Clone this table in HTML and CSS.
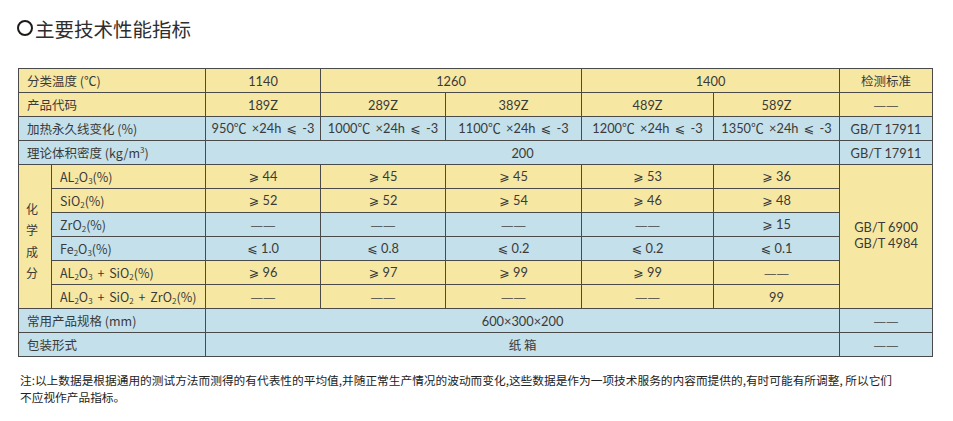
FILE: index.html
```html
<!DOCTYPE html>
<html lang="zh-CN">
<head>
<meta charset="utf-8">
<title>主要技术性能指标</title>
<link rel="stylesheet" href="styles.css">
</head>
<body>
<div class="page">
  <h1 class="title"><span class="ring"></span>主要技术性能指标</h1>
  <table class="spec">
    <colgroup>
      <col class="c1"><col class="c2"><col class="c3"><col class="c4"><col class="c5"><col class="c6"><col class="c7"><col class="c8">
    </colgroup>
    <tbody>
      <tr class="y">
        <td class="lab" colspan="2">分类温度 (℃)</td>
        <td>1140</td>
        <td colspan="2">1260</td>
        <td colspan="2">1400</td>
        <td class="cjk">检测标准</td>
      </tr>
      <tr class="y">
        <td class="lab" colspan="2">产品代码</td>
        <td>189Z</td><td>289Z</td><td>389Z</td><td>489Z</td><td>589Z</td>
        <td><span class="dash">—</span><span class="dash">—</span></td>
      </tr>
      <tr class="b">
        <td class="lab" colspan="2">加热永久线变化 (%)</td>
        <td class="ws">950℃ ×24h <span class="op">⩽</span> -3</td>
        <td class="ws">1000℃ ×24h <span class="op">⩽</span> -3</td>
        <td class="ws">1100℃ ×24h <span class="op">⩽</span> -3</td>
        <td class="ws">1200℃ ×24h <span class="op">⩽</span> -3</td>
        <td class="ws">1350℃ ×24h <span class="op">⩽</span> -3</td>
        <td>GB/T 17911</td>
      </tr>
      <tr class="b">
        <td class="lab" colspan="2">理论体积密度 (kg/m<sup>3</sup>)</td>
        <td colspan="5">200</td>
        <td>GB/T 17911</td>
      </tr>
      <tr class="y">
        <td class="vert" rowspan="6"><span>化</span><span>学</span><span>成</span><span>分</span></td>
        <td class="lab">AL<sub>2</sub>O<sub>3</sub>(%)</td>
        <td><span class="op">⩾</span> 44</td><td><span class="op">⩾</span> 45</td><td><span class="op">⩾</span> 45</td><td><span class="op">⩾</span> 53</td><td><span class="op">⩾</span> 36</td>
        <td class="std" rowspan="6">GB/T 6900<br>GB/T 4984</td>
      </tr>
      <tr class="y">
        <td class="lab">SiO<sub>2</sub>(%)</td>
        <td><span class="op">⩾</span> 52</td><td><span class="op">⩾</span> 52</td><td><span class="op">⩾</span> 54</td><td><span class="op">⩾</span> 46</td><td><span class="op">⩾</span> 48</td>
      </tr>
      <tr class="b">
        <td class="lab">ZrO<sub>2</sub>(%)</td>
        <td><span class="dash">—</span><span class="dash">—</span></td><td><span class="dash">—</span><span class="dash">—</span></td><td><span class="dash">—</span><span class="dash">—</span></td><td><span class="dash">—</span><span class="dash">—</span></td><td><span class="op">⩾</span> 15</td>
      </tr>
      <tr class="b">
        <td class="lab">Fe<sub>2</sub>O<sub>3</sub>(%)</td>
        <td><span class="op">⩽</span> 1.0</td><td><span class="op">⩽</span> 0.8</td><td><span class="op">⩽</span> 0.2</td><td><span class="op">⩽</span> 0.2</td><td><span class="op">⩽</span> 0.1</td>
      </tr>
      <tr class="y">
        <td class="lab">AL<sub>2</sub>O<sub>3</sub> <span class="plus">+</span> SiO<sub>2</sub>(%)</td>
        <td><span class="op">⩾</span> 96</td><td><span class="op">⩾</span> 97</td><td><span class="op">⩾</span> 99</td><td><span class="op">⩾</span> 99</td><td><span class="dash">—</span><span class="dash">—</span></td>
      </tr>
      <tr class="y">
        <td class="lab">AL<sub>2</sub>O<sub>3</sub> <span class="plus">+</span> SiO<sub>2</sub> <span class="plus">+</span> ZrO<sub>2</sub>(%)</td>
        <td><span class="dash">—</span><span class="dash">—</span></td><td><span class="dash">—</span><span class="dash">—</span></td><td><span class="dash">—</span><span class="dash">—</span></td><td><span class="dash">—</span><span class="dash">—</span></td><td>99</td>
      </tr>
      <tr class="b">
        <td class="lab" colspan="2">常用产品规格 (mm)</td>
        <td colspan="5">600×300×200</td>
        <td><span class="dash">—</span><span class="dash">—</span></td>
      </tr>
      <tr class="b">
        <td class="lab" colspan="2">包装形式</td>
        <td class="cjk" colspan="5">纸 箱</td>
        <td><span class="dash">—</span><span class="dash">—</span></td>
      </tr>
    </tbody>
  </table>
  <p class="note">注:以上数据是根据通用的测试方法而测得的有代表性的平均值,并随正常生产情况的波动而变化,这些数据是作为一项技术服务的内容而提供的,有时可能有所调整, 所以它们<br>不应视作产品指标。</p>
</div>
</body>
</html>
```
FILE: styles.css
```css
html, body {
  margin: 0;
  padding: 0;
  background: #ffffff;
}

.page {
  padding: 14px 0 0 17px;
  font-family: "Noto Sans CJK SC", sans-serif;
  color: #333333;
}

.title {
  display: flex;
  align-items: center;
  margin: 0;
  height: 28px;
  font-size: 19.5px;
  font-weight: 400;
  color: #2e2e2e;
}

.ring {
  display: inline-block;
  width: 12px;
  height: 12px;
  border: 2.8px solid #1e1a18;
  border-radius: 50%;
  margin-right: 2px;
}

.spec {
  margin-top: 26px;
  margin-left: 1px;
  border-collapse: collapse;
  table-layout: fixed;
  width: 915px;
  font-family: "Lato", "Noto Sans CJK SC", sans-serif;
  font-size: 12.8px;
  color: #3a3a3a;
}

.c1 { width: 33px; }
.c2 { width: 154px; }
.c3 { width: 115px; }
.c4 { width: 125px; }
.c5 { width: 136px; }
.c6 { width: 132px; }
.c7 { width: 126px; }
.c8 { width: 93px; }

.spec td {
  border: 1px solid #4a4a4a;
  height: 23px;
  padding: 0;
  text-align: center;
  vertical-align: middle;
  white-space: nowrap;
  line-height: 16px;
}

.spec tr.y td { background: #f6e8a2; }
.spec tr.b td { background: #c4e0ea; }

.spec td.lab,
.spec td.cjk {
  font-family: "Noto Sans CJK SC", sans-serif;
  font-size: 12.5px;
}

.spec td.lab {
  text-align: left;
  padding-left: 8px;
}

.spec td.ws {
  word-spacing: 2px;
}

.spec td.vert,
.spec tr td.std {
  background: #f6e8a2;
}

.spec td.vert {
  text-align: left;
  padding-left: 7px;
  font-family: "Noto Sans CJK SC", sans-serif;
  font-size: 12px;
  line-height: 21.5px;
  padding-top: 8px;
}

.vert span {
  display: block;
}

.spec td.std {
  line-height: 16px;
  padding-bottom: 4px;
}

.op {
  font-family: "DejaVu Sans", sans-serif;
  font-size: 12.5px;
}

.plus {
  padding: 0 2px;
}

.dash {
  display: inline-block;
  margin: 0 0.5px;
  font-family: "Liberation Sans", sans-serif;
  font-size: 11.5px;
  color: #444;
}

sub, sup {
  font-size: 8px;
  line-height: 0;
}

sub { vertical-align: -2px; }
sup { vertical-align: 5px; }

.note {
  margin: 14px 0 0 3px;
  font-size: 11.7px;
  line-height: 17px;
  color: #222222;
}
```
